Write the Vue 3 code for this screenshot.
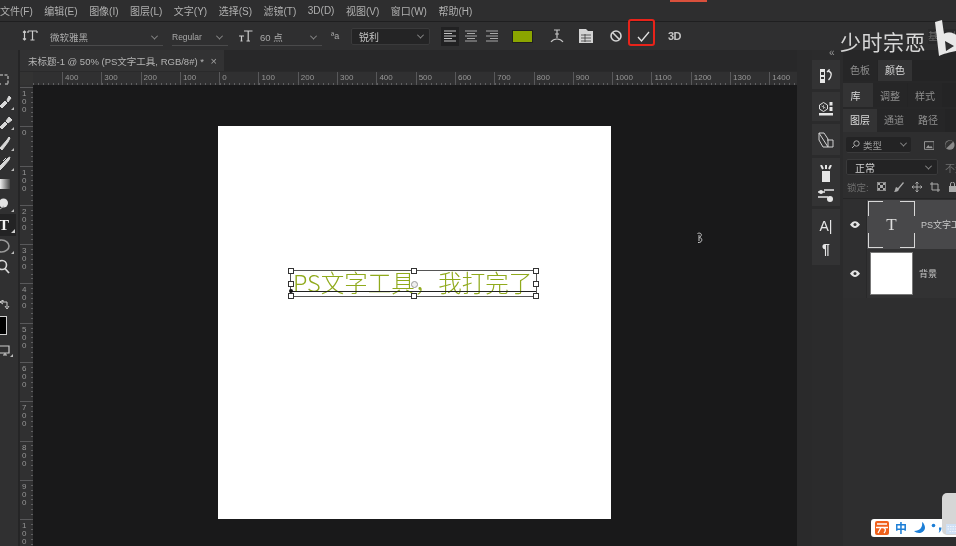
<script setup>
const menus = ['文件(F)', '编辑(E)', '图像(I)', '图层(L)', '文字(Y)', '选择(S)', '滤镜(T)', '3D(D)', '视图(V)', '窗口(W)', '帮助(H)']
const hLabels = [400, 300, 200, 100, 0, 100, 200, 300, 400, 500, 600, 700, 800, 900, 1000, 1100, 1200, 1300, 1400]
const vLabels = [100, 0, 100, 200, 300, 400, 500, 600, 700, 800, 900, 1000].map((n) => String(n).split(''))
const handles = [
  [0, 0], [50, 0], [100, 0],
  [0, 50], [100, 50],
  [0, 100], [50, 100], [100, 100]
]
const tools = [
  { h: 20, d: 'M0 4H8V13M0 13H1M5 13H8', dash: true },
  { h: 21, d: 'M0 14L5 9L7 11L2 16ZM7 8L9 4L11 6L8 10Z', fill: true, corner: true },
  { h: 20, d: 'M0 15L5 10L7 12L2 17ZM6 9L9 5L12 8L8 11Z', fill: true, corner: true },
  { h: 21, d: 'M0 15L7 7L9 4L10 5L8 9L2 17Z', fill: true, corner: true },
  { h: 20, d: 'M0 13L5 8L8 5L10 4L9 7L3 14L0 17ZM3 8L6 5', fill: true, corner: true }
]
</script>

<template>
  <div class="app">
    <header class="menu">
      <span v-for="m in menus" :key="m" class="menu-item">{{ m }}</span>
    </header>

    <section class="options">
      <svg class="opt-type" width="16" height="16" viewBox="0 0 16 16">
        <path d="M6 3H15M10.500 3V12M8.500 12H12.500M6 3V5M15 3V5M2.500 3V12M1 4.500L2.500 3L4 4.500M1 10.500L2.500 12L4 10.500" fill="none" stroke="#ccc" stroke-width="1.200" />
      </svg>
      <div class="field font-field"><span>微软雅黑</span><i class="chev" /></div>
      <div class="field style-field"><span>Regular</span><i class="chev" /></div>
      <svg class="opt-size" width="15" height="14" viewBox="0 0 15 14">
        <path d="M6 2H14.500M10.200 2V12M8.500 12H12M1 7H6M3.500 7V12M2.500 12H4.500" fill="none" stroke="#ccc" stroke-width="1.200" />
      </svg>
      <div class="field size-field"><span>60 点</span><i class="chev" /></div>
      <span class="aa">ªa</span>
      <div class="aa-select"><span>锐利</span><i class="chev" /></div>
      <div class="align active">
        <svg width="12" height="12" viewBox="0 0 12 12"><path d="M0 1H12M0 3.500H8M0 6H12M0 8.500H8M0 11H12" stroke="#c4c4c4" stroke-width="1.200" /></svg>
      </div>
      <div class="align">
        <svg width="12" height="12" viewBox="0 0 12 12"><path d="M0 1H12M2 3.500H10M0 6H12M2 8.500H10M0 11H12" stroke="#a8a8a8" stroke-width="1.200" /></svg>
      </div>
      <div class="align">
        <svg width="12" height="12" viewBox="0 0 12 12"><path d="M0 1H12M4 3.500H12M0 6H12M4 8.500H12M0 11H12" stroke="#a8a8a8" stroke-width="1.200" /></svg>
      </div>
      <div class="swatch" />
      <svg class="opt-warp" width="14" height="16" viewBox="0 0 14 16">
        <path d="M4 2H10M7 2V10M5 6H9M1 14C4 10 10 10 13 14" fill="none" stroke="#c4c4c4" stroke-width="1.200" />
      </svg>
      <svg class="opt-panel" width="14" height="14" viewBox="0 0 14 14">
        <path d="M0 0H7L9 2H14V14H0Z" fill="#d4d4d4" />
        <path d="M2 6H12M2 9H12M2 12H12M6 5V13" stroke="#3a3a3a" stroke-width="0.800" />
      </svg>
      <svg class="opt-cancel" width="12" height="12" viewBox="0 0 12 12">
        <circle cx="6" cy="6" r="5" fill="none" stroke="#d4d4d4" stroke-width="1.600" />
        <path d="M2.500 2.500L9.500 9.500" stroke="#d4d4d4" stroke-width="1.600" />
      </svg>
      <svg class="opt-check" width="13" height="11" viewBox="0 0 13 11">
        <path d="M1 6L4.500 10L12 1" fill="none" stroke="#e2e2e2" stroke-width="1.300" />
      </svg>
      <span class="opt-3d">3D</span>
    </section>

    <main class="workspace">
      <aside class="tools">
        <div v-for="(t, i) in tools" :key="i" class="tool" :style="{ height: t.h + 'px' }">
          <svg width="18" height="20" viewBox="0 0 18 20">
            <path :d="t.d" :fill="t.fill ? '#d8d8d8' : 'none'" stroke="#d8d8d8" :stroke-dasharray="t.dash ? '3 1.500' : null" />
            <path v-if="t.corner" d="M11 18H14V15Z" fill="#bbb" />
          </svg>
        </div>
        <div class="tool gradient-tool"><i class="gradient" /></div>
        <div class="tool">
          <svg width="18" height="20" viewBox="0 0 18 20">
            <circle cx="3.500" cy="9" r="4.500" fill="#e2e2e2" />
            <path d="M0 15L4 12" stroke="#bbb" />
            <path d="M11 18H14V15Z" fill="#bbb" />
          </svg>
        </div>
        <div class="tool type-tool">
          <span class="type-t">T</span>
          <svg class="corner" width="4" height="4" viewBox="0 0 4 4"><path d="M0 4H4V0Z" fill="#ccc" /></svg>
        </div>
        <div class="tool">
          <svg width="18" height="20" viewBox="0 0 18 20">
            <ellipse cx="1.500" cy="10" rx="7.500" ry="6" fill="none" stroke="#999" stroke-width="1.600" />
            <path d="M11 18H14V15Z" fill="#bbb" />
          </svg>
        </div>
        <div class="tool search-tool">
          <svg width="18" height="22" viewBox="0 0 18 22">
            <circle cx="2" cy="9" r="4.500" fill="none" stroke="#d8d8d8" stroke-width="1.600" />
            <path d="M5 12.500L9 17" stroke="#d8d8d8" stroke-width="1.800" />
          </svg>
        </div>
        <svg class="swap" width="10" height="10" viewBox="0 0 10 10">
          <path d="M0 2H3V0L0 2L3 4M3 2H7V7M5 6L7 9L9 6" fill="none" stroke="#cfcfcf" />
        </svg>
        <div class="fg-color" />
        <svg class="screen" width="14" height="14" viewBox="0 0 14 14">
          <path d="M0 1H9V8H0M3 10H7M5 8V10" fill="none" stroke="#ccc" stroke-width="1.200" />
          <path d="M10 12H13V9Z" fill="#bbb" />
        </svg>
      </aside>

      <section class="doc">
        <div class="tabs">
          <div class="tab">
            <span>未标题-1 @ 50% (PS文字工具, RGB/8#) *</span>
            <span class="tab-close">×</span>
          </div>
        </div>
        <div class="h-ruler">
          <div class="corner-cell" />
          <div class="h-spacer" />
          <div v-for="(n, i) in hLabels" :key="i" class="h-cell">{{ n }}</div>
        </div>
        <div class="doc-body">
          <div class="v-ruler">
            <div v-for="(digits, i) in vLabels" :key="i" class="v-cell">
              <span v-for="(d, j) in digits" :key="j">{{ d }}</span>
            </div>
          </div>
          <div class="canvas">
            <div class="page">
              <div class="textbox">
                <span class="typed">PS文字工具，我打完了</span>
                <i class="baseline" />
                <i class="anchor" />
                <i class="pivot" />
                <i
                  v-for="(h, i) in handles"
                  :key="i"
                  class="handle"
                  :style="{ left: h[0] + '%', top: h[1] + '%' }"
                />
              </div>
            </div>
            <svg class="pointer" width="8" height="12" viewBox="0 0 8 12">
              <path d="M1.500 1.500C5 0 7 3 3.500 5.500C7 6 6.500 11 2 10.500M3 3V9" fill="none" stroke="#c8c8c8" />
            </svg>
          </div>
        </div>
      </section>

      <div class="gutter" />

      <aside class="dock">
        <div class="dock-group g1">
          <svg width="12" height="14" viewBox="0 0 12 14">
            <path d="M0 0H5V14H0Z" fill="#e6e6e6" />
            <path d="M1 3H4V6H1ZM1 8H4V10H1Z" fill="#333" />
            <path d="M7 3L9 1V2.500C12 3 12 8 8.500 11" fill="none" stroke="#e6e6e6" stroke-width="1.300" />
          </svg>
        </div>
        <div class="dock-group g2">
          <svg width="14" height="14" viewBox="0 0 14 14">
            <path d="M4.500 .5L8.500 3V7L4.500 9.500L.5 7V3Z" fill="none" stroke="#ddd" />
            <path d="M4.500 3V7M2.500 4L6.500 6" stroke="#bbb" stroke-width="0.800" />
            <path d="M10.500 0H13.500V3.500H10.500ZM10.500 5H13.500V9H10.500ZM0 11H14V13.500H0Z" fill="#e6e6e6" />
          </svg>
        </div>
        <div class="dock-group g3">
          <svg width="16" height="16" viewBox="0 0 16 16">
            <path d="M1 1H6L10 7V15H5L1 8ZM1 1L10 15M9 8H15V15H10" fill="none" stroke="#d2d2d2" />
          </svg>
        </div>
        <div class="dock-group g4">
          <svg width="14" height="18" viewBox="0 0 14 18">
            <path d="M2 0L4 4M7 0V4M12 0L10 4" stroke="#e6e6e6" stroke-width="2" />
            <path d="M3 6H11V17H3Z" fill="#e6e6e6" />
          </svg>
          <svg width="16" height="14" viewBox="0 0 16 14">
            <path d="M0 3H7M6 1H16M0 8H10" stroke="#e6e6e6" stroke-width="1.500" />
            <circle cx="3" cy="3" r="2" fill="#e6e6e6" />
            <circle cx="12" cy="10" r="3" fill="#e6e6e6" />
          </svg>
        </div>
        <div class="dock-group g5">
          <span class="dock-a">A|</span>
          <span class="dock-p">¶</span>
        </div>
      </aside>

      <aside class="panels">
        <div class="panel-tabs row1">
          <span class="ptab">色板</span>
          <span class="ptab on">颜色</span>
        </div>
        <div class="panel-tabs row2">
          <span class="ptab on lib">库</span>
          <span class="ptab">调整</span>
          <span class="ptab">样式</span>
        </div>
        <div class="panel-tabs row3">
          <span class="ptab on">图层</span>
          <span class="ptab">通道</span>
          <span class="ptab">路径</span>
        </div>
        <div class="layers">
          <div class="filter-row">
            <div class="kind">
              <svg width="9" height="9" viewBox="0 0 9 9"><circle cx="5.500" cy="3.500" r="2.700" fill="none" stroke="#aaa" /><path d="M3.500 5.500L1 8" stroke="#aaa" /></svg>
              <span>类型</span>
              <i class="chev" />
            </div>
            <svg class="img-icon" width="11" height="9" viewBox="0 0 11 9">
              <path d="M.5 .5H10.500V8.500H.5Z" fill="none" stroke="#999" />
              <path d="M2 7L4.500 4L6 6L7.500 5L9 7Z" fill="#999" />
            </svg>
            <svg class="adj-icon" width="12" height="12" viewBox="0 0 12 12">
              <circle cx="6" cy="6" r="5" fill="#8a8a8a" />
              <path d="M2.500 9.500L9.500 2.500A5 5 0 0 0 2.500 9.500Z" fill="#333" />
            </svg>
          </div>
          <div class="blend-row">
            <div class="blend"><span>正常</span><i class="chev" /></div>
            <span class="opacity">不透明度</span>
          </div>
          <div class="lock-row">
            <span>锁定:</span>
            <svg width="9" height="9" viewBox="0 0 9 9"><path d="M0 0H3V3H0ZM6 0H9V3H6ZM3 3H6V6H3ZM0 6H3V9H0ZM6 6H9V9H6Z" fill="#aaa" /><path d="M.5 .5H8.500V8.500H.5Z" fill="none" stroke="#888" /></svg>
            <svg width="10" height="10" viewBox="0 0 10 10"><path d="M9 0L4 6L2 5C1 7 1 9 0 10C3 10 5 9 5 7L10 1Z" fill="#aaa" /></svg>
            <svg width="10" height="10" viewBox="0 0 10 10"><path d="M5 0V10M0 5H10M3.500 1.500L5 0L6.500 1.500M3.500 8.500L5 10L6.500 8.500M1.500 3.500L0 5L1.500 6.500M8.500 3.500L10 5L8.500 6.500" fill="none" stroke="#aaa" /></svg>
            <svg width="10" height="10" viewBox="0 0 10 10"><path d="M2 0V8H10M0 2H8V10" fill="none" stroke="#aaa" /></svg>
            <svg width="9" height="10" viewBox="0 0 9 10"><path d="M1 4H8V10H1Z" fill="#aaa" /><path d="M2.500 4V2A2 2 0 0 1 6.500 2V4" fill="none" stroke="#aaa" /></svg>
          </div>
          <div class="layer">
            <div class="eye-cell">
              <svg width="10" height="7" viewBox="0 0 10 7"><path d="M0 3.500C3 -1 7 -1 10 3.500C7 8 3 8 0 3.500Z" fill="#e4e4e4" /><circle cx="5" cy="3.500" r="1.500" fill="#333" /></svg>
            </div>
            <div class="layer-main active">
              <div class="thumb-text">
                <i class="bracket tl" /><i class="bracket tr" /><i class="bracket bl" /><i class="bracket br" />
                <span>T</span>
              </div>
              <span class="layer-name">PS文字工具，我打完了</span>
            </div>
          </div>
          <div class="layer">
            <div class="eye-cell">
              <svg width="10" height="7" viewBox="0 0 10 7"><path d="M0 3.500C3 -1 7 -1 10 3.500C7 8 3 8 0 3.500Z" fill="#e4e4e4" /><circle cx="5" cy="3.500" r="1.500" fill="#333" /></svg>
            </div>
            <div class="layer-main">
              <div class="thumb-white" />
              <span class="layer-name">背景</span>
            </div>
          </div>
        </div>
      </aside>
    </main>

    <!-- overlays burned into the recording -->
    <i class="rec-bar" />
    <i class="red-box" />
    <span class="collapse">‹‹</span>
    <span class="watermark">少时宗恧</span>
    <span class="workspace-name">基本功能</span>
    <svg class="bili" width="21" height="36" viewBox="0 0 21 36">
      <path d="M0 2L7 0L9 14C13 11 19 13 21 15V31C15 32 8 34 4 36ZM10 21L11 31L19 26Z" fill="#e8e8e8" fill-rule="evenodd" />
    </svg>
    <div class="ime">
      <i class="ime-logo">
        <svg width="14" height="14" viewBox="0 0 14 14"><path d="M2 3H12M1 6.500H13M6 6.500L3 12M8 6.500C11 7 11 10 9 12" fill="none" stroke="#fff" stroke-width="1.300" /></svg>
      </i>
      <span class="ime-zh">中</span>
      <svg class="ime-moon" width="11" height="12" viewBox="0 0 11 12"><path d="M8 0C9 5 6 9 0 9C3 12 10 12 11 6C11 4 10 1 8 0Z" fill="#1c7ed6" /></svg>
      <svg class="ime-dots" width="11" height="10" viewBox="0 0 11 10"><circle cx="2.500" cy="2.500" r="1.800" fill="#1c7ed6" /><path d="M8 4.500H10.500C10.500 7 9.500 9 7.500 10C8.500 8.500 8.500 7 8 6.500Z" fill="#1c7ed6" /></svg>
    </div>
    <div class="float-card">
      <svg class="keys" width="14" height="10" viewBox="0 0 14 10">
        <path d="M0 0H14V10H0Z" fill="#cfe0f5" />
        <path d="M1.500 2.500H12.500M1.500 5H12.500M3.500 7.500H10.500" stroke="#f0f5fc" stroke-dasharray="1.500 1" />
      </svg>
    </div>
  </div>
</template>

<style>
html,
body {
  margin: 0;
  background: #19191a;
}
</style>

<style scoped>
.app {
  position: relative;
  width: 956px;
  height: 546px;
  overflow: hidden;
  display: flex;
  flex-direction: column;
  background: #2d2d2e;
  color: #b4b4b4;
  font-family: "Liberation Sans", "Noto Sans CJK SC", sans-serif;
  font-size: 10px;
  filter: blur(0.35px);
}

/* menu */
.menu {
  flex: 0 0 22px;
  display: flex;
  align-items: center;
  gap: 11.500px;
  background: #2e2e2f;
  border-bottom: 1px solid #1f1f20;
  box-sizing: border-box;
  font-size: 10px;
  color: #b0b0b0;
  white-space: nowrap;
}

/* options */
.options {
  flex: 0 0 28px;
  display: flex;
  align-items: center;
  background: #2f2f30;
  position: relative;
}
.opt-type { margin-left: 22px; }
.field {
  height: 16px;
  display: flex;
  align-items: center;
  justify-content: space-between;
  border-bottom: 1px solid #4a4a4b;
  padding-right: 6px;
  box-sizing: border-box;
  margin-top: 3px;
  font-size: 9.500px;
  color: #a9a9a9;
}
.font-field { width: 113px; margin-left: 12px; }
.style-field { width: 56px; margin-left: 9px; font-size: 8.500px; }
.opt-size { margin-left: 10px; }
.size-field { width: 62px; margin-left: 7px; }
.chev {
  display: inline-block;
  width: 4px;
  height: 4px;
  flex: none;
  border-right: 1px solid #8c8c8c;
  border-bottom: 1px solid #8c8c8c;
  transform: rotate(45deg) translate(-1px, -1px);
}
.aa {
  margin-left: 9px;
  width: 11px;
  font-size: 9px;
  color: #aaa;
}
.aa-select {
  width: 79px;
  height: 17px;
  margin-left: 9px;
  box-sizing: border-box;
  padding: 0 6px 0 7px;
  background: #242425;
  border: 1px solid #3a3a3b;
  border-radius: 2px;
  display: flex;
  align-items: center;
  justify-content: space-between;
  color: #c2c2c2;
  font-size: 10px;
}
.align {
  width: 18px;
  height: 19px;
  display: flex;
  align-items: center;
  justify-content: center;
  margin-right: 3px;
}
.align.active {
  margin-left: 11px;
  background: #212122;
}
.swatch {
  width: 21px;
  height: 13px;
  margin-left: 8px;
  background: #8ba500;
  border: 1px solid #1f1f1f;
  box-sizing: border-box;
}
.opt-warp { margin-left: 17px; }
.opt-panel { margin-left: 15px; }
.opt-cancel { margin-left: 17px; }
.opt-check { margin-left: 15px; margin-top: 0; }
.opt-3d {
  margin-left: 18px;
  color: #c4c4c4;
  font-size: 11px;
  font-weight: 700;
  letter-spacing: -0.500px;
}

/* workspace */
.workspace {
  flex: 1;
  display: flex;
  min-height: 0;
}

.tools {
  flex: 0 0 18px;
  margin-right: 2px;
  display: flex;
  flex-direction: column;
  padding-top: 21px;
  background: #303031;
  box-shadow: 2px 0 0 #252526;
  overflow: hidden;
}
.tool {
  position: relative;
  height: 20px;
  flex: none;
  display: flex;
  align-items: center;
}
.gradient-tool { height: 21px; }
.gradient {
  display: block;
  width: 10px;
  height: 10px;
  background: linear-gradient(90deg, #eee, #444);
}
.type-tool {
  height: 22px;
  width: 16px;
  background: #232324;
}
.type-t {
  font-family: "Liberation Serif", serif;
  font-size: 15px;
  font-weight: 700;
  color: #f2f2f2;
  margin-left: -1px;
}
.corner {
  position: absolute;
  right: 1px;
  bottom: 3px;
}
.search-tool { height: 22px; }
.swap {
  margin: 22px 0 6px 0;
  flex: none;
}
.fg-color {
  flex: none;
  width: 6px;
  height: 17px;
  background: #000;
  border: 1px solid #cfcfcf;
  border-left: none;
}
.screen {
  margin-top: 10px;
  flex: none;
}

/* document */
.doc {
  flex: 0 0 777px;
  display: flex;
  flex-direction: column;
  min-width: 0;
}
.tabs {
  flex: 0 0 21px;
  background: #282829;
  display: flex;
}
.tab {
  width: 204px;
  box-sizing: border-box;
  padding-left: 8px;
  display: flex;
  align-items: center;
  justify-content: space-between;
  padding-right: 7px;
  background: #323233;
  color: #b4b4b4;
  font-size: 9.500px;
  white-space: nowrap;
}
.tab-close { color: #a0a0a0; font-size: 11px; }

.h-ruler {
  flex: 0 0 14px;
  display: flex;
  background-color: #303031;
  background-image: repeating-linear-gradient(90deg, #5f5f61 0 1px, transparent 1px 4.910px);
  background-size: 100% 2px;
  background-position: 13px bottom;
  background-repeat: no-repeat;
  overflow: hidden;
  border-top: 1px solid #2a2a2b;
  box-sizing: border-box;
}
.corner-cell {
  flex: 0 0 13px;
  background: #333;
}
.h-spacer { flex: 0 0 29px; }
.h-cell {
  flex: 0 0 39.300px;
  box-sizing: border-box;
  border-left: 1px solid #58585a;
  padding-left: 2px;
  font-size: 8px;
  line-height: 12px;
  color: #969696;
}

.doc-body {
  flex: 1;
  display: flex;
  min-height: 0;
}
.v-ruler {
  flex: 0 0 13px;
  box-sizing: border-box;
  padding-top: 2px;
  background-color: #303031;
  background-image: repeating-linear-gradient(180deg, #5f5f61 0 1px, transparent 1px 4.910px);
  background-size: 2px 100%;
  background-position: right 2px;
  background-repeat: no-repeat;
  overflow: hidden;
}
.v-cell {
  height: 39.300px;
  box-sizing: border-box;
  border-top: 1px solid #58585a;
  padding: 2px 0 0 2px;
  display: flex;
  flex-direction: column;
  font-size: 8px;
  line-height: 8px;
  color: #969696;
}
.canvas {
  flex: 1;
  position: relative;
  display: flex;
  justify-content: center;
  align-items: flex-start;
  padding: 41px 1px 0 0;
  background: #19191a;
  overflow: hidden;
}
.page {
  position: relative;
  width: 393px;
  height: 393px;
  background: #fff;
}
.textbox {
  position: absolute;
  left: 72px;
  top: 144px;
  width: 247px;
  height: 27px;
  border: 1px solid #555;
  box-sizing: border-box;
}
.typed {
  position: absolute;
  left: 2px;
  top: -4px;
  font-family: "Noto Sans CJK SC", sans-serif;
  font-size: 23.500px;
  line-height: 30px;
  font-weight: 300;
  white-space: nowrap;
  color: #90aa1c;
}
.baseline {
  position: absolute;
  left: 0;
  right: 0;
  top: 20px;
  height: 1px;
  background: #222;
}
.anchor {
  position: absolute;
  left: -2px;
  top: 18px;
  width: 4px;
  height: 4px;
  border-radius: 50%;
  background: #111;
}
.pivot {
  position: absolute;
  left: 50%;
  top: 50%;
  width: 5px;
  height: 5px;
  margin: -3px 0 0 -3px;
  border: 1px solid #999;
  border-radius: 50%;
  background: #eee;
}
.handle {
  position: absolute;
  width: 4px;
  height: 4px;
  margin: -3px 0 0 -3px;
  background: #fff;
  border: 1px solid #333;
}
.pointer {
  position: absolute;
  left: 663px;
  top: 147px;
}

.gutter {
  flex: 0 0 15px;
  background: #2a2a2b;
}
.dock {
  flex: 0 0 31px;
  box-sizing: border-box;
  padding-top: 10px;
  background: #2b2b2c;
  display: flex;
  flex-direction: column;
}
.dock-group {
  width: 28px;
  box-sizing: border-box;
  background: #333334;
  display: flex;
  flex-direction: column;
  align-items: center;
  justify-content: center;
  gap: 6px;
  margin-bottom: 3px;
}
.g1 { height: 29px; padding-top: 3px; }
.g2 { height: 29px; padding-top: 4px; }
.g3 { height: 31px; }
.g4 { height: 48px; padding-top: 3px; }
.g5 { height: 56px; gap: 7px; }
.dock-a { font-size: 14px; color: #e6e6e6; line-height: 16px; }
.dock-p { font-size: 14px; font-weight: 700; color: #e6e6e6; line-height: 16px; }

/* panels */
.panels {
  flex: 1;
  min-width: 0;
  padding-top: 10px;
  background: #272728;
  display: flex;
  flex-direction: column;
  overflow: hidden;
}
.panel-tabs {
  display: flex;
  font-size: 10px;
  color: #8f8f8f;
  background: #242425;
  white-space: nowrap;
}
.row1 { height: 21px; }
.row2 { height: 24px; margin-top: 2px; }
.row3 { height: 23px; margin-top: 2px; }
.ptab {
  width: 34px;
  display: flex;
  align-items: center;
  justify-content: center;
  flex: none;
  background: #262627;
  margin-right: 1px;
}
.row1 .ptab,
.row3 .ptab { padding-bottom: 2px; }
.row3 .ptab { margin-right: 0; }
.ptab.on {
  background: #333334;
  color: #dadada;
}
.ptab.lib {
  width: 30px;
  margin-right: 0;
  padding-right: 5px;
  box-sizing: border-box;
}
.layers {
  flex: 1;
  background: #2e2e2f;
  display: flex;
  flex-direction: column;
}
.filter-row {
  flex: 0 0 25px;
  display: flex;
  align-items: center;
  padding: 1px 0 0 3px;
  box-sizing: border-box;
}
.kind {
  width: 67px;
  height: 16px;
  box-sizing: border-box;
  padding: 0 5px;
  display: flex;
  align-items: center;
  gap: 3px;
  background: #232324;
  border-radius: 2px;
  font-size: 9.500px;
  color: #9a9a9a;
  border-bottom: 1px solid #3a3a3b;
}
.kind .chev { margin-left: auto; }
.img-icon { margin-left: 13px; }
.adj-icon { margin-left: 10px; }
.blend-row {
  flex: 0 0 16px;
  margin-top: 2px;
  display: flex;
  align-items: center;
  padding-left: 3px;
  gap: 7px;
  white-space: nowrap;
  overflow: hidden;
}
.blend {
  width: 92px;
  height: 16px;
  flex: none;
  box-sizing: border-box;
  padding: 0 6px 0 8px;
  display: flex;
  align-items: center;
  justify-content: space-between;
  background: #232324;
  border: 1px solid #3a3a3b;
  border-radius: 2px;
  color: #d0d0d0;
  font-size: 10px;
}
.opacity { color: #6f6f6f; font-size: 10px; }
.lock-row {
  flex: 0 0 23px;
  margin-bottom: 1px;
  display: flex;
  align-items: center;
  gap: 8px;
  padding-left: 4px;
  font-size: 9.500px;
  color: #6e6e6e;
  white-space: nowrap;
  overflow: hidden;
  border-bottom: 1px solid #252526;
}
.lock-row svg { flex: none; }
.layer {
  flex: 0 0 49px;
  display: flex;
}
.eye-cell {
  flex: 0 0 24px;
  display: flex;
  align-items: center;
  justify-content: center;
  background: #2f2f30;
  border-right: 1px solid #29292a;
  box-sizing: border-box;
}
.layer-main {
  flex: 1;
  min-width: 0;
  display: flex;
  align-items: center;
  padding-left: 3px;
  background: #323233;
  overflow: hidden;
}
.layer-main.active {
  background: #48484a;
  padding-left: 1px;
}
.layer-name {
  margin-left: 6px;
  font-size: 9px;
  color: #c8c8c8;
  white-space: nowrap;
}
.thumb-text {
  position: relative;
  width: 47px;
  height: 47px;
  flex: none;
  display: flex;
  align-items: center;
  justify-content: center;
  color: #dedede;
  font-family: "Liberation Serif", serif;
  font-size: 17px;
}
.bracket {
  position: absolute;
  width: 14px;
  height: 14px;
  border: 0 solid #d8d8d8;
}
.tl { left: 0; top: 0; border-width: 1px 0 0 1px; }
.tr { right: 0; top: 0; border-width: 1px 1px 0 0; }
.bl { left: 0; bottom: 0; border-width: 0 0 1px 1px; }
.br { right: 0; bottom: 0; border-width: 0 1px 1px 0; }
.thumb-white {
  width: 43px;
  height: 43px;
  flex: none;
  background: #fff;
  border: 1px solid #777;
  box-sizing: border-box;
}

/* overlays */
.rec-bar {
  position: absolute;
  left: 670px;
  top: 0;
  width: 37px;
  height: 2px;
  background: #d9503c;
}
.red-box {
  position: absolute;
  left: 628px;
  top: 19px;
  width: 27px;
  height: 27px;
  box-sizing: border-box;
  border: 2px solid #e8231a;
  border-radius: 3px;
}
.collapse {
  position: absolute;
  left: 829px;
  top: 47px;
  color: #999;
  font-size: 10px;
  letter-spacing: -1px;
}
.watermark {
  position: absolute;
  left: 840px;
  top: 27px;
  font-family: "Noto Sans CJK SC", sans-serif;
  font-size: 21px;
  line-height: 28px;
  letter-spacing: 0.500px;
  color: #d6d6d6;
  white-space: nowrap;
}
.workspace-name {
  position: absolute;
  left: 928px;
  top: 29px;
  width: 28px;
  height: 15px;
  overflow: hidden;
  background: #2a2a2b;
  color: #6a6a6a;
  font-size: 10px;
  line-height: 15px;
  white-space: nowrap;
}
.bili {
  position: absolute;
  left: 935px;
  top: 20px;
}
.float-card {
  position: absolute;
  left: 942px;
  top: 493px;
  width: 20px;
  height: 42px;
  border-radius: 5px;
  background: #d6d6d6;
}
.keys {
  position: absolute;
  left: 4px;
  top: 31px;
}
.ime {
  position: absolute;
  left: 871px;
  top: 519px;
  width: 85px;
  height: 18px;
  box-sizing: border-box;
  padding-left: 4px;
  display: flex;
  align-items: center;
  gap: 6px;
  background: #fff;
  border-radius: 3px 0 0 3px;
}
.ime-logo {
  width: 14px;
  height: 14px;
  flex: none;
  background: #f0611c;
  border-radius: 2px;
  display: flex;
}
.ime-zh {
  color: #1c7ed6;
  font-family: "Noto Sans CJK SC", sans-serif;
  font-size: 12px;
  font-weight: 700;
  line-height: 14px;
}
.ime-moon { margin-left: 1px; }
.ime-dots { margin-left: 0; }
</style>
